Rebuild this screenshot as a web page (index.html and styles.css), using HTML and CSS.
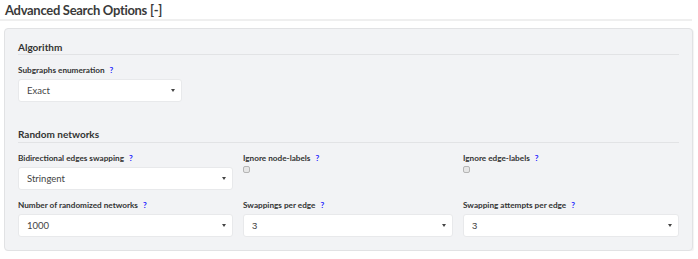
FILE: index.html
```html
<!DOCTYPE html>
<html lang="en">
<head>
    <meta charset="UTF-8">
    <meta name="viewport" content="width=device-width, initial-scale=1.0">
    <title>Advanced Search Options</title>
    <link rel="stylesheet" href="styles.css">
</head>
<body>
    <div class="options">
        <h3 class="title">Advanced Search Options [-]</h3>
        <div class="well">
            <h4 class="section">Algorithm</h4>
            <div class="row">
                <div class="field small">
                    <label>Subgraphs enumeration <span class="help">?</span></label>
                    <div class="select"><span>Exact</span><i class="caret"></i></div>
                </div>
            </div>

            <h4 class="section second">Random networks</h4>
            <div class="grid">
                <div class="field">
                    <label>Bidirectional edges swapping <span class="help">?</span></label>
                    <div class="select"><span>Stringent</span><i class="caret"></i></div>
                </div>
                <div class="field">
                    <label>Ignore node-labels <span class="help">?</span></label>
                    <input type="checkbox" class="check">
                </div>
                <div class="field">
                    <label>Ignore edge-labels <span class="help">?</span></label>
                    <input type="checkbox" class="check">
                </div>
                <div class="field">
                    <label>Number of randomized networks <span class="help">?</span></label>
                    <div class="select"><span>1000</span><i class="caret"></i></div>
                </div>
                <div class="field">
                    <label>Swappings per edge <span class="help">?</span></label>
                    <div class="select"><span class="num">3</span><i class="caret"></i></div>
                </div>
                <div class="field">
                    <label>Swapping attempts per edge <span class="help">?</span></label>
                    <div class="select"><span class="num">3</span><i class="caret"></i></div>
                </div>
            </div>
        </div>
    </div>
</body>
</html>
```

FILE: styles.css
```css
body {
    margin: 0;
    font-family: Lato, "Open Sans", sans-serif;
    color: #333;
    background: #fff;
}

.options {
    width: 694px;
}

.title {
    margin: 0 2px 0 0;
    padding: 2px 0 0 5px;
    height: 17px;
    font-size: 13px;
    font-weight: 700;
    letter-spacing: -0.3px;
    line-height: 17px;
    color: #3a3a3a;
    border-bottom: 2px solid #efefef;
}

.well {
    margin: 7px 0 0 4px;
    padding: 12px 13px 13px 13px;
    width: 661px;
    background: #f2f3f5;
    border: 1px solid #e1e2e4;
    border-radius: 4px;
    box-shadow: 1px 1px 1px rgba(0, 0, 0, 0.05);
}

.section {
    margin: 0;
    font-size: 10px;
    font-weight: 700;
    line-height: 12px;
    padding-bottom: 1px;
    border-bottom: 1px solid #e2e3e5;
}

.section.second {
    margin-top: 26px;
    padding-bottom: 2px;
}

.row {
    display: flex;
}

.grid {
    display: grid;
    grid-template-columns: 215px 210px 216px;
    column-gap: 10px;
}

.field {
    display: flex;
    flex-direction: column;
}

.field.small {
    width: 164px;
}

.field label {
    margin-top: 10px;
    font-size: 8.2px;
    font-weight: 700;
    line-height: 10px;
    color: #333;
}

.help {
    margin-left: 3px;
    color: #1a1aff;
}

.select {
    box-sizing: border-box;
    margin-top: 4px;
    height: 23px;
    background: #fff;
    border: 1px solid #e8e9eb;
    border-radius: 3px;
    display: flex;
    align-items: center;
    justify-content: space-between;
    padding: 0 6px 0 8px;
    font-size: 9.5px;
    color: #444;
}

.select .num {
    font-family: "Liberation Sans", Arial, sans-serif;
}

.caret {
    width: 0;
    height: 0;
    border-left: 2.5px solid transparent;
    border-right: 2.5px solid transparent;
    border-top: 3px solid #444;
}

.check {
    appearance: none;
    margin: 3px 0 0 0;
    width: 7px;
    height: 7px;
    background: #e6e6e6;
    border: 1px solid #b5b5b5;
    border-radius: 2px;
}
```
